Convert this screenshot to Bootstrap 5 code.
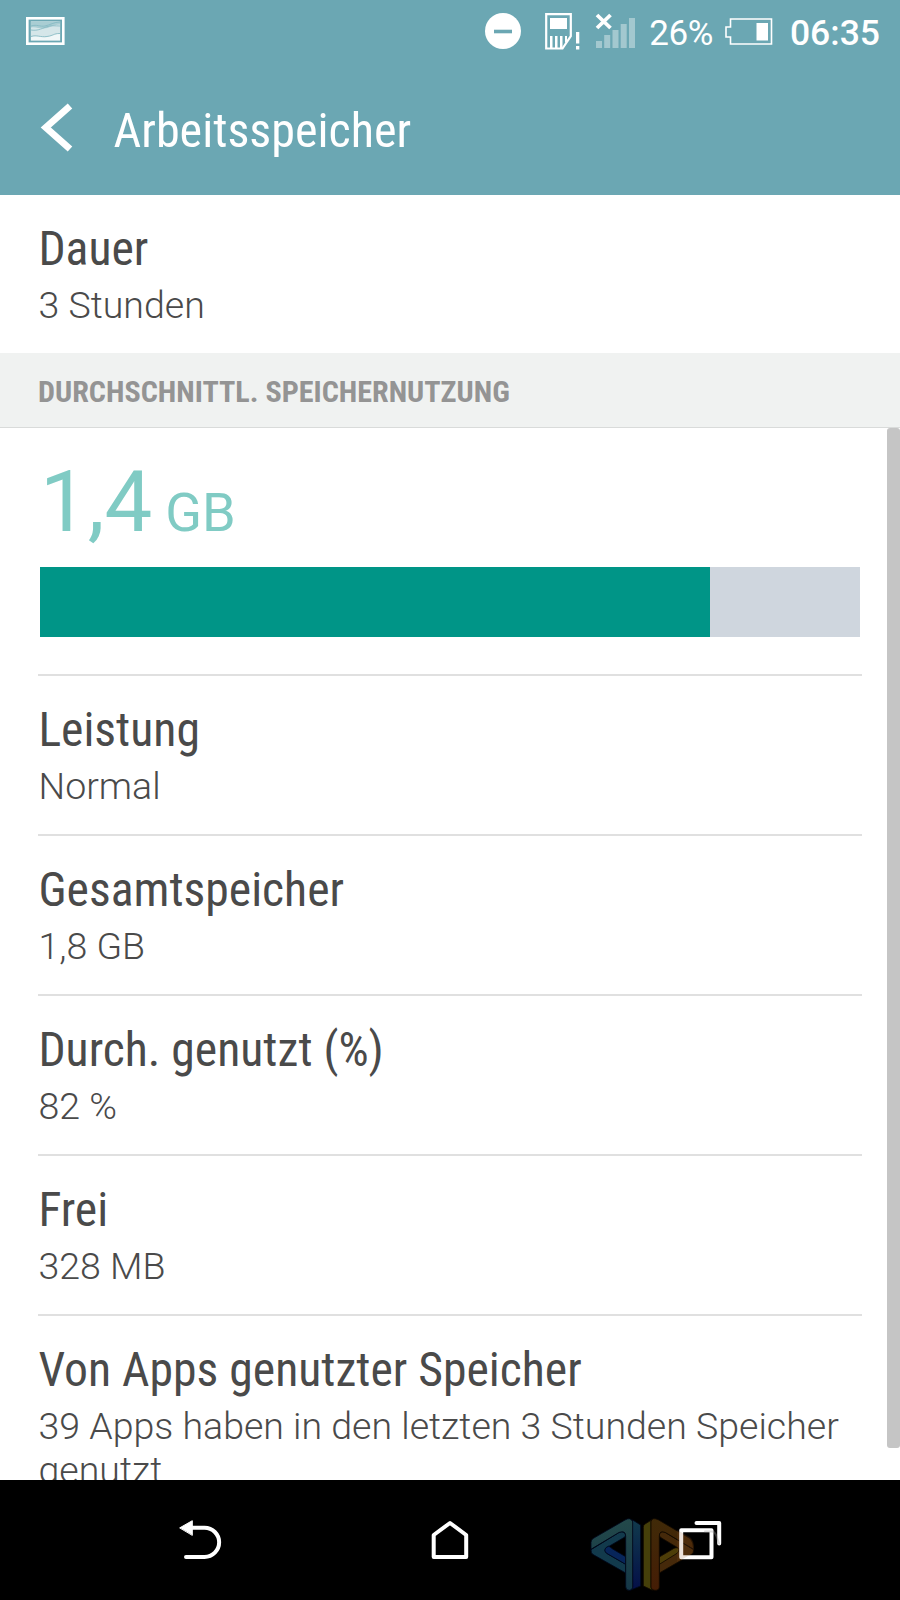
<!DOCTYPE html>
<html lang="de">
<head>
<meta charset="utf-8">
<meta name="viewport" content="width=device-width, initial-scale=1">
<title>Arbeitsspeicher</title>
<link href="https://cdn.jsdelivr.net/npm/bootstrap@5.3.0/dist/css/bootstrap.min.css" rel="stylesheet">
<style>
body{font-family:Roboto,"Liberation Sans",sans-serif;color:#4a4a4a;background:#fff}
.screen{width:900px;height:1600px}
.top-area{background:#6ba7b3;height:195px}
.status{height:62px;padding:0 20px 0 26px}
.status svg,.bar-title svg{display:block;flex:none}
.pct{font-size:35px;line-height:41px;font-weight:400;letter-spacing:-.4px;padding-top:4px;margin-left:14px}
.clock{font-size:35.5px;line-height:41px;font-weight:500;padding-top:4px;margin-left:17px}
.bar-title{height:133px;padding:0 0 2px 40px}
.cond{font-family:"Roboto Condensed",Roboto,sans-serif;font-stretch:75%}
.page-title{font-size:48.1px;line-height:56px;margin:6px 0 0 39.5px}
.list-pad{padding:0 38px}
.period{height:158px;padding-top:26px}
.entry{height:160px;padding-top:26px}
.entry-title{font-size:47.7px;line-height:56px;white-space:nowrap;padding-left:.4px}
.entry-sub{font-size:37.5px;line-height:44px;font-weight:300;margin-top:6px;padding-left:.5px}
.divided{border-top:2px solid #e0e0e0}
.group-head{height:75px;background:#f0f2f1;border-bottom:1px solid #d9dbda;color:#949494;font-size:30.1px;font-weight:700;padding:4px 0 0 38px}
.scroll-body{height:1052px}
.amount{color:#80cbc4;height:139px;padding:24px 0 0 2px;line-height:100px}
.amount-num{font-size:85px}
.amount-unit{font-size:54px;margin-left:9px}
.meter{height:70px;border-radius:0;background:#cfd6de;width:820px;margin:0 0 37px 2px}
.meter .progress-bar{background:#009587}
.thumb{right:0;top:0;width:13px;height:1020px;background:#c5c5c5;border-radius:3px}
.softkeys{height:120px}
.softkeys svg{display:block}
</style>
</head>
<body>
<div class="screen d-flex flex-column overflow-hidden">
  <header class="top-area text-white flex-shrink-0">
    <div class="status d-flex align-items-center">
      <svg width="39" height="28" viewBox="0 0 39 28"><rect x="1.300" y="1.300" width="36" height="25.400" fill="none" stroke="#fff" stroke-width="2.600"/><rect x="4.500" y="4" width="30" height="20" fill="#d5e6e9"/><path d="M5 4.500h29v3c-8 0-10 4-17 4-5 0-7-2-12-1z" fill="#a9cdd3"/><path d="M5 9c6-2 9 1 14 0s9-4 15-4M5 13c6 1 10-1 15-3s9-1 14-1" fill="none" stroke="#82b8c1" stroke-width=".8"/><path d="M5 20c6-2 9 1 16 0s6-3 13-3v6H5z" fill="#f0f7f8"/><path d="M5 19.500c6-2 9 1 16 0s6-3 13-3" fill="none" stroke="#82b8c1" stroke-width=".8"/><rect x="4" y="3.600" width="31" height="20.800" fill="none" stroke="#6ba7b3" stroke-width="1.200"/></svg>
      <svg class="ms-auto" width="36" height="36" viewBox="0 0 36 36"><circle cx="18" cy="18" r="18" fill="#fff"/><path d="M9 18.500h18" stroke="#6ba7b3" stroke-width="3.600"/></svg>
      <svg style="margin-left:24px" width="35" height="37" viewBox="0 0 35 37"><path d="M1.200 1.200h24.600v22L17.500 35.500H1.200z" fill="none" stroke="#fff" stroke-width="2.200"/><path d="M5 5h17v11H5zM5 23h2.500v12H5zM10 23h2.500v12H10zM15 23h2.500v12H15zM20 23h2v5l-2 2z" fill="#fff"/><path d="M31 19h3.300v11.500H31zM31 33h3.300v3.500H31z" fill="#fff"/></svg>
      <svg style="margin-left:15px" width="40" height="36" viewBox="0 0 40 36"><path d="M1 28h6v7H1zM9.200 22h6v13h-6zM17.500 17h6v18h-6zM25.700 11h6v24h-6zM34 5h6v30h-6z" fill="#a3c8cf"/><path d="M2 2l13.500 13M15.500 2L2 15" stroke="#fff" stroke-width="3.800"/></svg>
      <span class="pct">26%</span>
      <svg style="margin-left:12px" width="48" height="27" viewBox="0 0 48 27"><path d="M5.500 1h41v25h-41v-7H1V9h4.500z" fill="none" stroke="#fff" stroke-width="1.600"/><path d="M31.500 5h11.500v17.500h-11.500z" fill="#fff"/></svg>
      <span class="clock">06:35</span>
    </div>
    <div class="bar-title d-flex align-items-center">
      <svg width="34" height="49" viewBox="0 0 34 49"><path d="M30 3L5.800 24.500l24.200 21.500" fill="none" stroke="#fff" stroke-width="6.800"/></svg>
      <h1 class="page-title cond fw-normal">Arbeitsspeicher</h1>
    </div>
  </header>

  <section class="list-pad period flex-shrink-0">
    <div class="entry-title cond">Dauer</div>
    <div class="entry-sub">3 Stunden</div>
  </section>
  <h2 class="group-head cond d-flex align-items-center mb-0 flex-shrink-0"><span>DURCHSCHNITTL. SPEICHERNUTZUNG</span></h2>

  <main class="scroll-body position-relative overflow-hidden flex-shrink-0">
    <div class="list-pad">
      <div class="amount text-nowrap"><span class="amount-num">1,4</span> <span class="amount-unit">GB</span></div>
      <div class="progress meter"><div class="progress-bar" style="width:81.7%"></div></div>
      <div class="entry divided"><div class="entry-title cond">Leistung</div><div class="entry-sub">Normal</div></div>
      <div class="entry divided"><div class="entry-title cond">Gesamtspeicher</div><div class="entry-sub">1,8 GB</div></div>
      <div class="entry divided"><div class="entry-title cond">Durch. genutzt (%)</div><div class="entry-sub">82 %</div></div>
      <div class="entry divided"><div class="entry-title cond">Frei</div><div class="entry-sub">328 MB</div></div>
      <div class="entry divided"><div class="entry-title cond">Von Apps genutzter Speicher</div><div class="entry-sub">39 Apps haben in den letzten 3 Stunden Speicher genutzt</div></div>
    </div>
    <div class="thumb position-absolute"></div>
  </main>

  <nav class="softkeys bg-black flex-shrink-0">
    <svg width="900" height="120" viewBox="0 0 900 120" fill="none" stroke="#fff" stroke-width="4" stroke-linecap="round" stroke-linejoin="round">
      <defs>
        <linearGradient id="blueSide" x1="0" y1="0" x2="0" y2="1"><stop offset="0" stop-color="#113a4c"/><stop offset="1" stop-color="#040f48"/></linearGradient>
        <linearGradient id="tealFront" x1="0" y1="0" x2="0" y2="1"><stop offset="0" stop-color="#23494a"/><stop offset="1" stop-color="#153848"/></linearGradient>
        <linearGradient id="brownFront" x1="0" y1="0" x2="0" y2="1"><stop offset="0" stop-color="#402a08"/><stop offset="1" stop-color="#451d05"/></linearGradient>
      </defs>
      <g transform="translate(580 20) scale(.3333)" stroke="#00071c" stroke-width="2.500">
        <path d="M158 60L182 75V258L150 271Q158 268 158 262z" fill="url(#blueSide)"/>
        <path d="M33 149L118 97Q133 92 137 105Q137 112 128 115L80 143Q70 150 80 160L137 193V219L38 163Q33 159 33 149z" fill="#123a4c"/>
        <path d="M78 143Q70 151 80 160L137 193V170L98 147Q93 143 87 139z" fill="#07255a"/>
        <path d="M33 147V127Q33 120 40 115L135 60Q152 50 158 65V262Q156 271 148 271Q137 271 137 260V108Q137 90 118 97z" fill="url(#tealFront)"/>
      </g>
      <g transform="translate(580 20) scale(.3333)" stroke="#120a00" stroke-width="2.500">
        <path d="M218 58L195 72Q190 75 190 82V258L218 271L213 262V65z" fill="#453f0a"/>
        <path d="M341 149L255 97Q240 92 238 105Q238 112 246 115L293 143L238 171V219L335 163Q341 159 341 149z" fill="#45290a"/>
        <path d="M238 171L282 145Q294 140 297 149Q297 157 288 162L238 193z" fill="#4d3d08"/>
        <path d="M341 147Q341 127 331 116L236 60Q216 50 213 65V262Q215 271 225 271Q238 271 238 260V108Q238 90 255 97z" fill="url(#brownFront)"/>
      </g>
      <path d="M187 47.700h17.500a14.600 14.600 0 0 1 0 29.300h-18.500"/><path d="M180 47.700l12.300-7v14.300z" fill="#fff" stroke-width="1"/>
      <path d="M433.700 55L450 43l16.200 12V77h-32.500z"/>
      <path d="M681.200 50.300h30.300v27h-30.300z"/><path d="M696.500 43h22.700v20.500"/>
      <path d="M677 50l13 7q4 3 4 12-1 4-4 6l-13 7z" fill="#8a4a20" fill-opacity=".16" stroke="none"/>
      <path d="M705 51.500h7.500q3 1 4.500 6l2 6" stroke="#999" stroke-opacity=".35" stroke-width="2"/>
    </svg>
  </nav>
</div>
<script src="https://cdn.jsdelivr.net/npm/bootstrap@5.3.0/dist/js/bootstrap.bundle.min.js"></script>
</body>
</html>
